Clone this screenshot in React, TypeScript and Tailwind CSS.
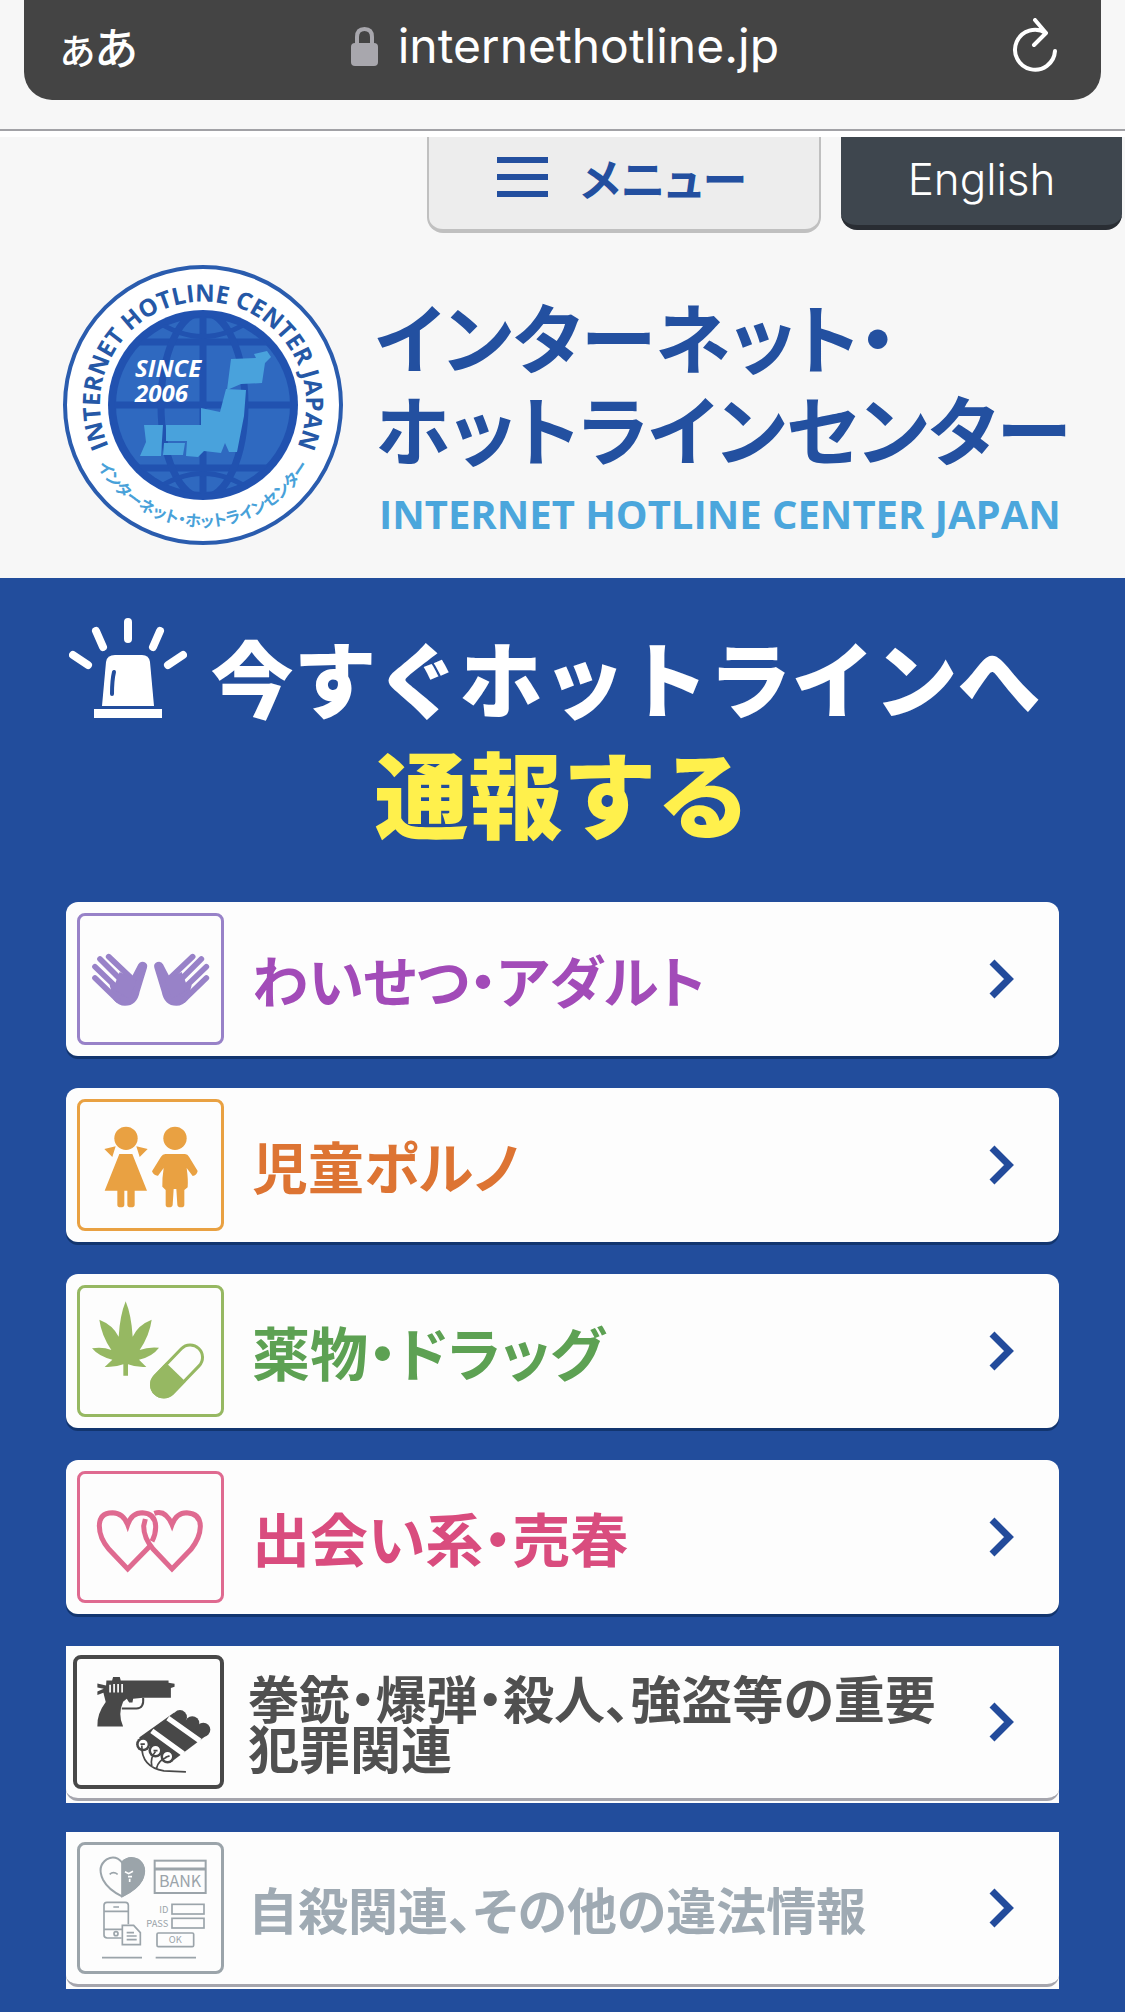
import type { ReactNode } from 'react';
import { clsx } from 'clsx';

type Report = {
  label: string;
  icon: ReactNode;
  color: string;
  frame: string;
  size: string;
  framed?: boolean;
};

function HandsIcon() {
  const hand = (
    <>
      <path d="M150 285 L215 262 L236 222 A14 14 0 0 1 262 232 L240 304 Q232 346 196 346 Q176 346 162 328 Z" fill="currentColor" />
      <path d="M147 199 L222 270 M121 206 L205 290 M106 229 L190 310 M106 263 L175 330" stroke="currentColor" strokeWidth="17" strokeLinecap="round" />
      <path d="M180 245 L230 270 L210 325 L160 295 Z" fill="currentColor" />
    </>
  );
  return (
    <svg viewBox="61 77 423 378" className="w-full" fill="none" aria-hidden="true">
      {hand}
      <g transform="translate(546 0) scale(-1 1)">{hand}</g>
    </svg>
  );
}

function ChildrenIcon() {
  return (
    <svg viewBox="61 66 423 378" className="w-full" fill="currentColor" aria-hidden="true">
      <circle cx="199" cy="175" r="35" />
      <path d="M134 207 L168 199 L158 231 Z M264 207 L230 199 L240 231 Z" />
      <path d="M179 222 H218 L262 332 H225 V374 Q225 382 214 382 Q203 382 203 374 V332 H194 V374 Q194 382 183 382 Q173 382 173 374 V332 H135 Z" />
      <circle cx="346" cy="175" r="35" />
      <path d="M317 222 H376 Q384 222 388 230 L414 273 Q411 287 399 288 L381 264 Q386 300 384 322 L374 330 V374 Q374 382 364 382 Q354 382 353 374 L350 327 H342 L339 374 Q338 382 328 382 Q318 382 318 374 V330 L308 320 Q307 296 312 264 L295 287 Q283 288 277 274 L304 230 Q309 222 317 222 Z" />
    </svg>
  );
}

function DrugsIcon() {
  return (
    <svg viewBox="61 69 423 378" className="w-full" fill="none" aria-hidden="true">
      <path
        fill="currentColor"
        d="M198 109 Q181 150 177 215 Q160 180 119 164 Q125 210 155 255 Q130 245 97 250 Q118 275 158 284 L135 306 Q165 308 191 298 V332 H205 V298 Q230 308 260 306 L238 284 Q278 275 298 248 Q265 245 240 255 Q270 210 276 164 Q235 180 219 215 Q215 150 198 109 Z"
      />
      <g transform="translate(352 318) rotate(-46)">
        <rect x="-94" y="-37" width="188" height="74" rx="37" stroke="currentColor" strokeWidth="9" />
        <path d="M-5 -41 H-57 A41 41 0 0 0 -57 41 H-5 Z" fill="currentColor" />
      </g>
    </svg>
  );
}

function HeartsIcon() {
  return (
    <svg viewBox="61 72 423 378" className="w-full" fill="none" stroke="currentColor" strokeWidth="15" aria-hidden="true">
      <path d="M272 287 L204 357 L148 298 Q119 264 119 228 Q119 188 158 188 Q191 189 204 224 Q216 188 248 188 Q288 190 288 232 Q288 253 277 274" />
      <path d="M284 190 Q318 178 337 224 Q350 188 381 188 Q422 190 422 230 Q421 264 394 298 L337 357 L281 298 Q252 264 252 228 L257 207" />
    </svg>
  );
}

function WeaponsIcon() {
  return (
    <svg viewBox="50 79 428 376" className="w-full" fill="none" stroke="currentColor" strokeWidth="5" aria-hidden="true">
      <path
        fill="currentColor"
        stroke="none"
        d="M111 152 L137 158 L138 143 H155 L158 133 H178 L181 143 H324 V150 L342 153 V162 L331 166 V195 H248 L218 198 L216 209 L206 209 L199 198 L188 207 Q171 245 188 281 H111 Q109 244 136 208 L129 180 L111 187 V176 L130 168 L111 164 Z"
      />
      <path d="M149 156 V179 M161 154 V179 M173 154 V179 M185 154 V179" stroke="white" />
      <path d="M248 195 Q251 227 228 227 L184 227" strokeWidth="6" />
      <g stroke="none" fill="currentColor">
        <path d="M236 314 L340 240 L440 306 L330 389 Z" />
        <circle cx="358" cy="253" r="21" />
        <circle cx="395" cy="271" r="21" />
        <circle cx="428" cy="291" r="21" />
        <circle cx="248" cy="334" r="21" />
        <circle cx="285" cy="353" r="21" />
        <circle cx="321" cy="371" r="21" />
      </g>
      <path d="M322 256 L418 324 M274 294 L368 362" stroke="white" strokeWidth="16" />
      <circle cx="248" cy="334" r="16" fill="white" />
      <circle cx="285" cy="353" r="16" fill="white" />
      <circle cx="321" cy="371" r="16" fill="white" />
      <path d="M244 338 Q242 402 310 414 L376 417 M285 356 Q268 375 274 400 M318 373 Q292 384 288 406" />
      <path d="M240 334 H253 M279 353 H291 M315 373 L327 369" />
    </svg>
  );
}

function OtherIcon() {
  return (
    <svg viewBox="61 77 423 378" className="w-full font-['Noto_Sans_CJK_JP',sans-serif]" fill="none" stroke="currentColor" strokeWidth="5" aria-hidden="true">
      <path d="M187 129 Q167 106 141 120 Q111 141 130 181 Q145 210 187 231 Q232 209 247 181 Q264 142 235 121 Q208 108 187 129 Z" strokeWidth="6" />
      <path d="M187 129 Q208 108 235 121 Q264 142 247 181 Q232 209 187 231 Z" fill="currentColor" />
      <path d="M150 165 Q161 155 174 165" />
      <path d="M196 157 L207 163 L220 156 M205 172 H217 M210 178 V188" stroke="white" />
      <rect x="285" y="124" width="153" height="97" strokeWidth="6" />
      <path d="M285 149 H438" strokeWidth="9" />
      <text x="361" y="204" textAnchor="middle" fontSize="48" fill="currentColor" stroke="none">BANK</text>
      <path d="M186 356 H143 Q133 356 133 347 V258 Q133 249 142 249 H197 Q206 249 206 258 V315 M133 276 H206 M133 330 H188 M161 263 H178" />
      <circle cx="169" cy="343" r="6" />
      <path d="M188 318 H222 L242 340 V376 H188 Z M201 340 H223 M201 350 H231 M201 361 H231" />
      <rect x="337" y="255" width="96" height="29" />
      <rect x="337" y="297" width="96" height="29" />
      <rect x="292" y="341" width="110" height="41" rx="4" />
      <g fontSize="28" fill="currentColor" stroke="none">
        <text x="326" y="280" textAnchor="end">ID</text>
        <text x="326" y="323" textAnchor="end">PASS</text>
        <text x="347" y="372" textAnchor="middle">OK</text>
      </g>
      <path d="M127 415 H247 M288 415 H409" />
    </svg>
  );
}

function Emblem() {
  return (
    <svg viewBox="0 0 280 280" className="w-[280px] shrink-0" role="img" aria-label="Internet Hotline Center Japan">
      <defs>
        <path id="arc-top" d="M63.2 208.3 A103 103 0 1 1 216.8 208.3" />
        <path id="arc-bottom" d="M18 140 A122 122 0 0 0 262 140" />
        <clipPath id="globe">
          <circle cx="140" cy="140" r="89" />
        </clipPath>
      </defs>
      <circle cx="140" cy="140" r="138" fill="white" stroke="#2a5cae" strokeWidth="4" />
      <circle cx="140" cy="140" r="95" fill="#2152b0" />
      <g clipPath="url(#globe)">
        <circle cx="140" cy="140" r="87" fill="#2f69c0" />
        <g fill="none" stroke="#2152b0" strokeWidth="7">
          <path d="M140 45 V235 M45 140 H235 M60 77 H220 M60 203 H220" />
          <ellipse cx="140" cy="140" rx="42" ry="93" />
          <path d="M92 55 Q140 88 188 55 M92 225 Q140 192 188 225" strokeWidth="5" />
        </g>
      </g>
      <g fill="#49a2dc">
        <path d="M168 94 L193 93 L191 89 L204 86 L208 92 L202 98 L199 118 L178 119 L164 125 Z" />
        <path d="M163 124 L183 125 L181 151 L174 187 L166 187 L162 178 L158 188 L141 186 L135 192 L123 191 L124 176 H103 V160 H138 V143 L157 147 Z" />
        <path d="M81 160 H100 L98 191 H77 L83 177 Z M101 178 H122 L120 190 H100 Z" />
      </g>
      <g className="font-['Open_Sans',sans-serif]" fontSize="24" fontWeight="700" fontStyle="italic" fill="white">
        <text x="72" y="112">SINCE</text>
        <text x="72" y="137">2006</text>
      </g>
      <text className="font-['Open_Sans',sans-serif]" fontSize="24" fontWeight="700" fill="#2558a6">
        <textPath href="#arc-top" startOffset="50%" textAnchor="middle">INTERNET HOTLINE CENTER JAPAN</textPath>
      </text>
      <text className="font-['Noto_Sans_CJK_JP',sans-serif] [font-feature-settings:'palt']" fontSize="16" fontWeight="700" fill="#48a1d9">
        <textPath href="#arc-bottom" startOffset="50%" textAnchor="middle">インターネット・ホットラインセンター</textPath>
      </text>
    </svg>
  );
}

function SirenIcon() {
  return (
    <svg viewBox="0 0 118 102" className="w-[118px] shrink-0" aria-hidden="true">
      <g stroke="white" strokeWidth="8" strokeLinecap="round">
        <path d="M59 4 V21 M27 13 L34 29 M91 13 L84 29 M4 37 L19 47 M114 37 L99 47" />
      </g>
      <path d="M37 44 Q38 37 46 37 H73 Q80 37 81 44 L85 88 H33 Z" fill="white" />
      <path d="M45 54 Q43 62 43 76" stroke="#224d9c" strokeWidth="4" strokeLinecap="round" fill="none" />
      <rect x="25" y="91" width="68" height="9" fill="white" />
    </svg>
  );
}

const reports: Report[] = [
  { label: 'わいせつ・アダルト', icon: <HandsIcon />, color: 'text-[#a24bb8]', frame: 'text-[#9882c8]', size: 'text-[56px]' },
  { label: '児童ポルノ', icon: <ChildrenIcon />, color: 'text-[#dd7433]', frame: 'text-[#e9a142]', size: 'text-[56px]' },
  { label: '薬物・ドラッグ', icon: <DrugsIcon />, color: 'text-[#5da153]', frame: 'text-[#96b862]', size: 'text-[58px]' },
  { label: '出会い系・売春', icon: <HeartsIcon />, color: 'text-[#d94c7e]', frame: 'text-[#df6a90]', size: 'text-[58px]' },
  { label: '拳銃・爆弾・殺人、強盗等の重要犯罪関連', icon: <WeaponsIcon />, color: 'text-[#505050]', frame: '-ml-1 w-[151px] border-4 text-[#484848]', size: 'text-[51px]', framed: true },
  { label: '自殺関連、その他の違法情報', icon: <OtherIcon />, color: 'text-[#9faab3]', frame: 'w-[147px] border-3 text-[#9ba4aa]', size: 'text-[50px]', framed: true },
];

function ReportCard({ label, icon, color, frame, size, framed }: Report) {
  return (
    <li className={framed ? 'bg-[#fdfdfd] pb-[2px]' : 'pb-[3px]'}>
      <a
        href="#report"
        className={clsx(
          'flex items-center bg-[#fdfdfd] pr-[44px] pl-[11px]',
          framed
            ? 'min-h-[155px] rounded-b-xl border-b-3 border-[#a5a5ad]'
            : 'min-h-[154px] rounded-xl shadow-[0_3px_0_#12356f]',
        )}
      >
        <span className={clsx('shrink-0 rounded-lg border-current', !framed && 'w-[147px] border-3', frame)}>{icon}</span>
        <span className={clsx('mr-4 flex-1 leading-[50px] font-bold', framed ? 'ml-6' : 'ml-7', color, size)}>{label}</span>
        <svg viewBox="0 0 26 40" className="w-[26px] shrink-0" fill="none" stroke="#234b9b" strokeWidth="7" aria-hidden="true">
          <path d="M3 3 L20 20 L3 37" />
        </svg>
      </a>
    </li>
  );
}

export default function App() {
  return (
    <div className="min-h-screen bg-[#224d9c] font-['Noto_Sans_CJK_JP',sans-serif] [font-feature-settings:'palt']">
      {/* Browser bar */}
      <div className="border-b-2 border-[#a2a2a6] bg-[#f7f7f7] px-6 pb-[29px]">
        <div className="flex h-[100px] items-center justify-between rounded-b-[28px] bg-[#444444] pr-[43px] pb-2 pl-9 text-white">
          <button type="button" aria-label="表示設定" className="flex items-baseline leading-none font-medium">
            <span className="text-[36px]">あ</span>
            <span className="text-[44px]">あ</span>
          </button>
          <div className="mr-5 flex items-center gap-5">
            <svg viewBox="0 0 27 39" className="w-[27px]" aria-hidden="true">
              <path d="M6 17 V10 Q6 2 13.5 2 Q21 2 21 10 V17" fill="none" stroke="#a8a7ad" strokeWidth="4" />
              <rect y="16" width="27" height="23" rx="4" fill="#a8a7ad" />
            </svg>
            <span className="font-['Inter',sans-serif] text-[48px] leading-none">internethotline.jp</span>
          </div>
          <button type="button" aria-label="再読み込み">
            <svg viewBox="0 0 46 56" className="w-[46px]" fill="none" stroke="white" strokeWidth="4" strokeLinecap="round" strokeLinejoin="round" aria-hidden="true">
              <path d="M43 33 A20 20 0 1 1 34 15 M23 2 L34 15 L22 27" />
            </svg>
          </button>
        </div>
      </div>

      {/* Site header */}
      <header className="border-t-[6px] border-white bg-[#f7f7f7] pb-[33px]">
        <div className="flex items-start justify-end gap-5 pr-[3px]">
          <button type="button" className="flex h-[96px] w-[394px] items-center justify-center gap-8 rounded-b-2xl border-2 border-t-0 border-b-4 border-[#c0c0c0] bg-[#ededed] pr-1 pb-3 text-[#234f9f]">
            <svg viewBox="0 0 51 40" className="w-[51px]" fill="currentColor" aria-hidden="true">
              <path d="M0 0 H51 V6 H0 Z M0 17 H51 V23 H0 Z M0 34 H51 V40 H0 Z" />
            </svg>
            <span className="text-[45px] leading-none font-bold">メニュー</span>
          </button>
          <a href="#english" className="flex h-[93px] w-[281px] items-center justify-center rounded-b-2xl border-b-5 border-[#292d33] bg-[#3e464e] pb-1 font-['Inter',sans-serif] text-[44px] leading-none font-light text-white">
            English
          </a>
        </div>
        <div className="mt-8 flex items-start gap-8 pl-[63px]">
          <Emblem />
          <div className="pt-6">
            <h1 className="text-[76px] leading-[92px] font-bold text-[#2350a0]">
              インターネット・
              <br />
              ホットラインセンター
            </h1>
            <p className="mt-4 ml-1 font-['Open_Sans',sans-serif] text-[40px] leading-[50px] font-bold text-[#4ba6dc]">
              INTERNET HOTLINE CENTER JAPAN
            </p>
          </div>
        </div>
      </header>

      {/* Report list */}
      <main className="px-[66px] pt-10 pb-6">
        <h2 className="text-center font-black text-white [font-feature-settings:normal]">
          <span className="flex items-start justify-center gap-6 pr-4 text-[83px] leading-[116px]">
            <SirenIcon />
            今すぐホットラインへ
          </span>
          <span className="block text-[94px] leading-[114px] text-[#fff04c]">通報する</span>
        </h2>
        <ul className="mt-[54px] flex flex-col gap-[29px]">
          {reports.map((report) => (
            <ReportCard key={report.label} {...report} />
          ))}
        </ul>
      </main>
    </div>
  );
}
